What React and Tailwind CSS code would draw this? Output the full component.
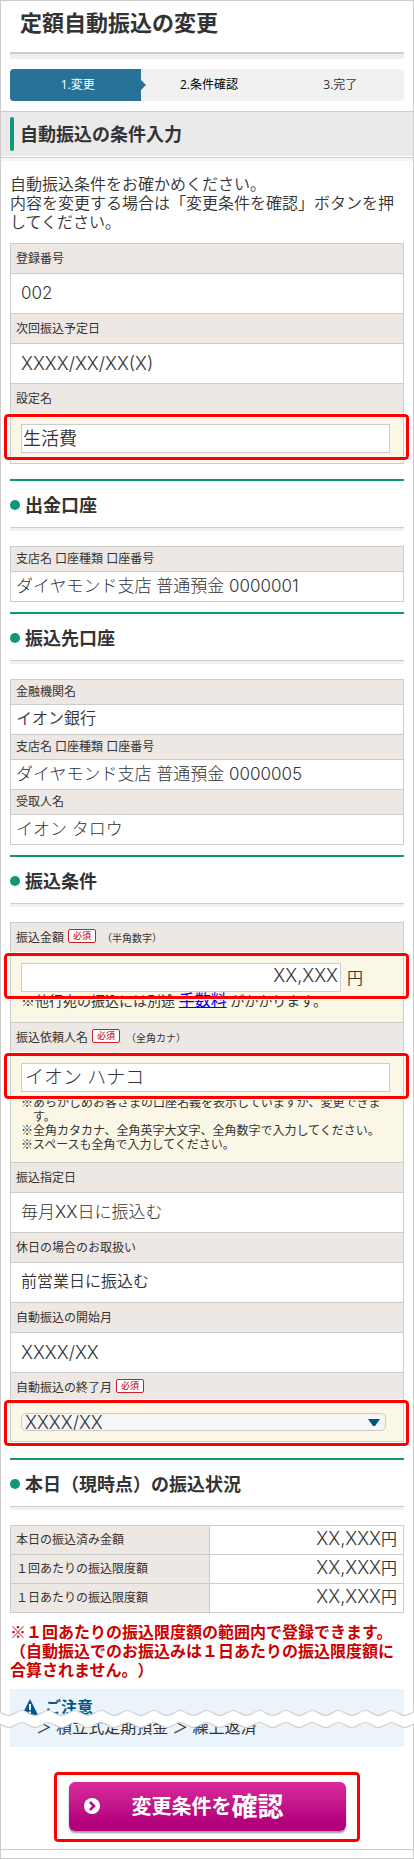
import React from 'react';

const Ring = ({ className = '-left-[7px] -right-1.5 top-0 h-[46px]' }) => (
  <span
    aria-hidden="true"
    className={`absolute ${className} border-3 border-[#ff0000] rounded-[4px] outline outline-white pointer-events-none`}
  />
);

const Required = () => (
  <span className="ml-1 mb-1 inline-flex h-[14px] w-7 items-center justify-center rounded-[2px] border border-[#cc1e28] bg-white pb-px text-[9px] font-medium leading-none text-[#cc1e28]">
    必須
  </span>
);

const SectionHeading = ({ children }) => (
  <div className="border-t-2 border-[#129679]">
    <h3 className="flex h-[46px] items-center gap-[5px] pt-0.5 text-lg leading-none font-bold">
      <span className="size-2.5 rounded-full bg-[#129679]" />
      {children}
    </h3>
    <div className="h-1 border-t border-[#ccc] bg-[#f1f1f1]" />
  </div>
);

const Label = ({ children, compact, htmlFor }) => {
  const Tag = htmlFor ? 'label' : 'div';
  return (
    <Tag
      htmlFor={htmlFor}
      className={`${compact ? 'h-[25px]' : 'h-[30px]'} flex items-center border-t border-[#ccc] bg-[#ede8e4] px-[5px] text-xs leading-none`}
    >
      {children}
    </Tag>
  );
};

const valueFonts = {
  plain: 'text-base font-[350] pb-1',
  masked: "text-[17px] font-light font-['Inter','Noto_Sans_CJK_JP',sans-serif]",
  date: "text-lg font-light font-['Inter','Noto_Sans_CJK_JP',sans-serif]",
};

const Value = ({ children, compact, font = 'plain' }) => (
  <div
    className={`${compact ? 'h-[30px] px-[5px]' : 'h-10 px-2.5'} ${valueFonts[font]} flex items-center border-t border-[#ccc] leading-none`}
  >
    {children}
  </div>
);

const Panel = ({ children }) => (
  <div className="border-x border-b border-[#ccc]">{children}</div>
);

const steps = ['1.変更', '2.条件確認', '3.完了'];

const limits = [
  ['本日の振込済み金額', 'XX,XXX'],
  ['１回あたりの振込限度額', 'XX,XXX'],
  ['１日あたりの振込限度額', 'XX,XXX'],
];

const inputClass =
  "block h-[29px] rounded-none border border-[#ccc] bg-white leading-none outline-none font-['Inter','Noto_Sans_CJK_JP',sans-serif]";

const Wave = () => (
  <svg className="absolute inset-x-0 top-5 h-6 w-full" preserveAspectRatio="none" viewBox="0 0 414 24" aria-hidden="true">
    <defs>
      <pattern id="wave" width="26.4" height="24" patternUnits="userSpaceOnUse" x="-4.5">
        <path d="M0 1.5C5 1.5 8 6.5 13.2 6.5S21.4 1.5 26.4 1.5V13.5C21.4 13.5 18.4 18.5 13.2 18.5S5 13.5 0 13.5Z" fill="#fff" />
        <path d="M0 1.5C5 1.5 8 6.5 13.2 6.5S21.4 1.5 26.4 1.5M0 13.5C5 13.5 8 18.5 13.2 18.5S21.4 13.5 26.4 13.5" fill="none" stroke="#ccc" />
      </pattern>
    </defs>
    <rect width="414" height="24" fill="url(#wave)" />
  </svg>
);

const App = () => (
  <main className="border border-[#ccc] bg-white font-['Open_Sans','Noto_Sans_CJK_JP',sans-serif] text-[#333] [text-spacing-trim:space-all]">
    <div className="px-[9px]">
      <h1 className="px-2.5 pt-2 pb-[17px] text-[22px] leading-[26px] font-bold">定額自動振込の変更</h1>
      <div className="h-[7px] border-t-2 border-[#ccc] bg-[#eee]" />
      <ol className="mt-2.5 grid h-8 grid-cols-3 rounded-[4px] bg-[#f1f1f1] text-xs">
        {steps.map((step, i) => (
          <li
            key={step}
            className={
              i === 0
                ? 'relative flex items-center justify-center rounded-l-[4px] bg-[#297297] pl-1 text-white'
                : 'flex items-center justify-center pl-1 text-black last:text-[#333]'
            }
          >
            {step}
            {i === 0 && (
              <svg className="absolute top-[11px] left-full" width="5" height="10" viewBox="0 0 5 10">
                <path d="M0 0L5 5L0 10Z" fill="#297297" />
              </svg>
            )}
          </li>
        ))}
      </ol>
    </div>

    <div className="mt-2.5 border-t border-[#ccc] bg-[#eaeaea] px-[9px] py-[5px]">
      <h2 className="flex h-[34px] items-center gap-1.5 text-lg leading-none font-bold">
        <span className="h-full w-1 rounded-[2px] bg-[#129679]" />
        自動振込の条件入力
      </h2>
    </div>
    <div className="mt-px h-1 border-t border-[#ccc] bg-[#f5f5f5]" />

    <form className="px-[9px]" onSubmit={(e) => e.preventDefault()}>
      <p className="pt-3.5 pb-[11px] text-base leading-[19px] font-[350]">
        自動振込条件をお確かめください。
        <br />
        内容を変更する場合は「変更条件を確認」ボタンを押してください。
      </p>

      <Panel>
        <Label>登録番号</Label>
        <Value font="masked">002</Value>
        <Label>次回振込予定日</Label>
        <Value font="date">XXXX/XX/XX(X)</Value>
        <Label htmlFor="setting-name">設定名</Label>
        <div className="relative border-t border-[#ccc] bg-[#faf7e6] px-2.5 pt-2.5 pb-2.5">
          <input
            id="setting-name"
            defaultValue="生活費"
            className={`${inputClass} w-[calc(100%-3px)] px-px pb-1 text-lg font-[350]`}
          />
          <Ring />
        </div>
      </Panel>

      <div className="mt-[15px]">
        <SectionHeading>出金口座</SectionHeading>
      </div>
      <div className="mt-[15px]">
        <Panel>
          <Label compact>支店名 口座種類 口座番号</Label>
          <Value compact font="masked">ダイヤモンド支店 普通預金 0000001</Value>
        </Panel>
      </div>

      <div className="mt-2.5">
        <SectionHeading>振込先口座</SectionHeading>
      </div>
      <div className="mt-[15px]">
        <Panel>
          <Label compact>金融機関名</Label>
          <Value compact>イオン銀行</Value>
          <Label compact>支店名 口座種類 口座番号</Label>
          <Value compact font="masked">ダイヤモンド支店 普通預金 0000005</Value>
          <Label compact>受取人名</Label>
          <Value compact font="masked">イオン タロウ</Value>
        </Panel>
      </div>

      <div className="mt-2.5">
        <SectionHeading>振込条件</SectionHeading>
      </div>
      <div className="mt-[15px]">
        <Panel>
          <Label htmlFor="amount">
            振込金額
            <Required />
            <span className="ml-1.5 text-[10px]">（半角数字）</span>
          </Label>
          <div className="relative border-t border-[#ccc] bg-[#faf7e6] px-2.5 pt-2.5 pb-3">
            <div className="flex items-center gap-1.5">
              <input id="amount" defaultValue="XX,XXX" className={`${inputClass} w-80 px-0.5 pb-1 text-right text-lg font-light`} />
              <span className="text-base leading-none font-[350]">円</span>
            </div>
            <p className="text-sm leading-[18px]">
              ※他行宛の振込には別途{' '}
              <a href="#fee" className="text-base leading-none text-[#0000ff] underline">
                手数料
              </a>{' '}
              がかかります。
            </p>
            <Ring />
          </div>
          <Label htmlFor="client-name">
            振込依頼人名
            <Required />
            <span className="ml-1.5 text-[10px]">（全角カナ）</span>
          </Label>
          <div className="relative border-t border-[#ccc] bg-[#faf7e6] px-2.5 pt-2.5 pb-2.5">
            <input
              id="client-name"
              defaultValue="イオン ハナコ"
              className={`${inputClass} w-[calc(100%-3px)] px-[3px] pb-1 text-[19px] font-light`}
            />
            <ul className="pt-1 text-xs leading-[14px]">
              <li className="pl-3 -indent-3">※あらかじめお客さまの口座名義を表示していますが、変更できます。</li>
              <li>※全角カタカナ、全角英字大文字、全角数字で入力してください。</li>
              <li>※スペースも全角で入力してください。</li>
            </ul>
            <Ring />
          </div>
          <Label>振込指定日</Label>
          <Value font="masked">毎月XX日に振込む</Value>
          <Label>休日の場合のお取扱い</Label>
          <Value>前営業日に振込む</Value>
          <Label>自動振込の開始月</Label>
          <Value font="date">XXXX/XX</Value>
          <Label htmlFor="end-month">
            自動振込の終了月
            <Required />
          </Label>
          <div className="relative border-t border-[#ccc] bg-[#faf7e6] px-2.5 pt-2.5 pb-2.5">
            <div className="relative mr-[7px]">
              <select
                id="end-month"
                className="block h-[18px] w-full appearance-none rounded-[5px] border border-[#ccc] bg-[#f6f6f6] px-[3px] font-['Inter','Noto_Sans_CJK_JP',sans-serif] text-lg leading-none font-light"
              >
                <option>XXXX/XX</option>
              </select>
              <svg className="pointer-events-none absolute top-[6px] right-1.5" width="12" height="7" viewBox="0 0 12 7">
                <path d="M0 0H12L7 7H5Z" fill="#00558a" />
              </svg>
            </div>
            <Ring className="-left-[7px] -right-1.5 -top-[3px] h-[46px]" />
          </div>
        </Panel>
      </div>

      <div className="mt-4">
        <SectionHeading>本日（現時点）の振込状況</SectionHeading>
      </div>
      <table className="mt-[15px] w-full border-collapse">
        <tbody>
          {limits.map(([name, amount]) => (
            <tr key={name} className="h-[29px]">
              <th scope="row" className="border border-[#ccc] bg-[#ede8e4] px-[5px] text-left text-xs leading-none font-normal">
                {name}
              </th>
              <td className="w-[194px] border border-[#ccc] px-1.5 pb-0.5 text-right font-['Inter','Noto_Sans_CJK_JP',sans-serif] text-lg leading-none font-light">
                {amount}
                <span className="text-base leading-none font-[350]">円</span>
              </td>
            </tr>
          ))}
        </tbody>
      </table>

      <p className="mt-2.5 text-base leading-[19px] font-bold text-[#c00]">
        ※１回あたりの振込限度額の範囲内で登録できます。
        <br />
        （自動振込でのお振込みは１日あたりの振込限度額に合算されません。）
      </p>

      <div className="relative -mx-2.5 mt-[9px] px-2.5">
        <div className="h-[58px] overflow-hidden bg-[#eaf4fa] px-3 pt-2.5">
          <h4 className="flex h-4 items-center gap-[7px] text-base leading-none font-bold text-[#00558a]">
            <svg width="16" height="16" viewBox="0 0 16 16">
              <path d="M8 0L16 16H0Z" fill="#00558a" />
              <path d="M7 5H9V11H7ZM7 12.500H9V14H7Z" fill="#fff" />
            </svg>
            ご注意
          </h4>
          <p className="pt-1 pl-3.5 text-base leading-4">＞ 積立式定期預金 ＞ 繰上返済</p>
        </div>
        <Wave />
      </div>

      <div className="relative mx-auto mt-[25px] w-[306px] pt-2.5 pr-[14px] pb-[11px] pl-[15px]">
        <button
          type="submit"
          className="relative flex h-[49px] w-full items-center justify-center rounded-md bg-linear-to-b from-[#d82a9c] to-[#b4007d] to-80% text-xl font-bold text-white shadow-[0_2px_2px_#999]"
        >
          <svg className="absolute top-4 left-[15px]" width="16" height="16" viewBox="0 0 16 16">
            <circle cx="8" cy="8" r="8" fill="#fff" />
            <path d="M6 4L10 8L6 12" fill="none" stroke="#b80a84" strokeWidth="2.500" />
          </svg>
          変更条件を<span className="text-[26px]">確認</span>
        </button>
        <Ring className="inset-0" />
      </div>
    </form>
    <div className="mt-[7px] h-[9px] border-t border-[#ccc]" />
  </main>
);

export default App;
